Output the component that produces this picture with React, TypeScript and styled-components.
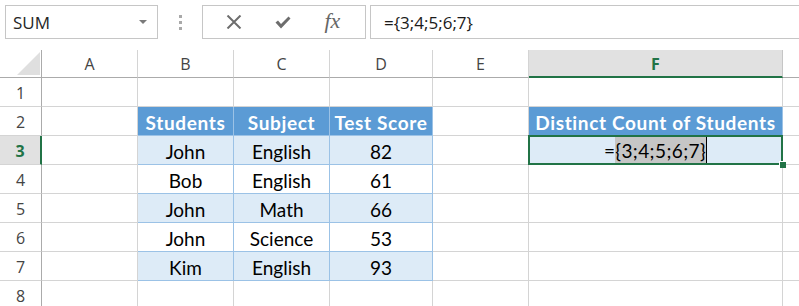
import styled, { createGlobalStyle, css } from 'styled-components'

const GlobalStyle = createGlobalStyle`
  html, body {
    margin: 0;
    padding: 0;
    background: #ffffff;
    overflow: hidden;
  }
`

const Page = styled.div`
  width: 799px;
  height: 306px;
  overflow: hidden;
  background: #ffffff;
`

const FormulaBar = styled.div`
  display: flex;
  align-items: center;
  height: 34px;
  padding: 5px 0 0 5px;
  margin-bottom: 11px;
`

const NameBox = styled.div`
  display: flex;
  align-items: center;
  justify-content: space-between;
  box-sizing: border-box;
  width: 153px;
  height: 34px;
  padding: 0 10px 0 7px;
  border: 1px solid #c6c6c6;
  font-family: 'Open Sans', sans-serif;
  font-size: 17px;
  color: #262626;
`

const DropArrow = styled.span`
  width: 0;
  height: 0;
  border-left: 4px solid transparent;
  border-right: 4px solid transparent;
  border-top: 4px solid #7a7a7a;
`

const Grip = styled.div`
  display: flex;
  flex-direction: column;
  gap: 3px;
  margin: 0 20px 0 21px;

  span {
    width: 3px;
    height: 3px;
    background: #a9a9a9;
  }
`

const ButtonBox = styled.div`
  display: flex;
  align-items: center;
  justify-content: space-around;
  box-sizing: border-box;
  width: 164px;
  height: 34px;
  padding: 0 8px 0 6px;
  border: 1px solid #c6c6c6;
  margin-right: 4px;
`

const Fx = styled.span`
  font-family: 'Liberation Serif', serif;
  font-style: italic;
  font-size: 22px;
  color: #666666;
  margin-top: -2px;
`

const FormulaInput = styled.div`
  flex: 1;
  display: flex;
  align-items: center;
  box-sizing: border-box;
  height: 34px;
  padding-left: 13px;
  border: 1px solid #c6c6c6;
  border-right: none;
  font-family: 'Open Sans', sans-serif;
  font-size: 17px;
  color: #1a1a1a;
`

const Sheet = styled.div`
  display: grid;
  grid-template-columns: 42px 96px 96px 96px 103px 96px 254px 96px;
  grid-auto-rows: 29px;
  grid-template-rows: 28px;
`

const Corner = styled.div`
  box-sizing: border-box;
  display: flex;
  align-items: flex-end;
  justify-content: flex-end;
  padding: 0 1px 2px 0;
  border-right: 1px solid #ababab;
  border-bottom: 1px solid #ababab;

  span {
    width: 23px;
    height: 23px;
    background: #dfdfdf;
    clip-path: polygon(100% 0, 100% 100%, 0 100%);
  }
`

const ColHead = styled.div<{ $active?: boolean }>`
  box-sizing: border-box;
  display: flex;
  align-items: center;
  justify-content: center;
  padding-top: 1px;
  border-right: 1px solid #d4d4d4;
  border-bottom: 1px solid #ababab;
  font-family: 'Open Sans', sans-serif;
  font-size: 16px;
  color: #444444;
  ${({ $active }) =>
    $active &&
    css`
      background: #e1e1e1;
      color: #217346;
      font-weight: 700;
      border-bottom: 2px solid #217346;
      border-right-color: #c6c6c6;
    `}
`

const RowHead = styled.div<{ $active?: boolean }>`
  box-sizing: border-box;
  display: flex;
  align-items: center;
  justify-content: center;
  padding-top: 1px;
  border-right: 1px solid #ababab;
  border-bottom: 1px solid #d4d4d4;
  font-family: 'Open Sans', sans-serif;
  font-size: 16px;
  color: #444444;
  ${({ $active }) =>
    $active &&
    css`
      background: #e1e1e1;
      color: #217346;
      font-weight: 700;
      border-right: 2px solid #217346;
    `}
`

type Tone = 'none' | 'head' | 'band' | 'white'

const Cell = styled.div<{ $tone: Tone; $selected?: boolean }>`
  position: relative;
  box-sizing: border-box;
  display: flex;
  align-items: center;
  justify-content: center;
  padding-top: 2px;
  white-space: nowrap;
  border-right: 1px solid #d4d4d4;
  border-bottom: 1px solid #d4d4d4;
  font-family: Lato, 'Open Sans', sans-serif;
  font-size: 19px;
  color: #000000;
  ${({ $tone }) =>
    $tone === 'head' &&
    css`
      background: #5b9bd5;
      color: #ffffff;
      font-weight: 700;
      letter-spacing: 0.65px;
      border-color: #9bc2e6;
    `}
  ${({ $tone }) =>
    $tone === 'band' &&
    css`
      background: #ddebf7;
      border-color: #9bc2e6;
    `}
  ${({ $tone }) =>
    $tone === 'white' &&
    css`
      background: #ffffff;
      border-color: #9bc2e6;
    `}
  ${({ $selected }) =>
    $selected &&
    css`
      padding-top: 0;
      letter-spacing: 0.4px;
      &::after {
        content: '';
        position: absolute;
        left: -1px;
        top: -1px;
        right: -1px;
        bottom: -1px;
        border: 2px solid #217346;
      }
    `}
`

const FillHandle = styled.span`
  position: absolute;
  right: -4px;
  bottom: -4px;
  width: 6px;
  height: 6px;
  background: #217346;
  border: 1px solid #ffffff;
  border-right: none;
  border-bottom: none;
  z-index: 1;
`

const Marked = styled.span`
  display: inline-flex;
  align-items: center;
  height: 27px;
  padding-top: 1px;
  background: #c6c6c6;
  border-right: 1px solid #000000;
`

// the last column runs past the right edge, its letter is off screen
const columns = ['A', 'B', 'C', 'D', 'E', 'F', '']

const table: string[][] = [
  ['Students', 'Subject', 'Test Score'],
  ['John', 'English', '82'],
  ['Bob', 'English', '61'],
  ['John', 'Math', '66'],
  ['John', 'Science', '53'],
  ['Kim', 'English', '93'],
]

function CancelIcon() {
  return (
    <svg width="16" height="14" viewBox="0 0 16 14">
      <path d="M1.5 0.5 L14.5 13.5 M14.5 0.5 L1.5 13.5" stroke="#6d6d6d" strokeWidth="2" fill="none" />
    </svg>
  )
}

function EnterIcon() {
  return (
    <svg width="16" height="13" viewBox="0 0 16 13">
      <path d="M0.5 6.5 L3 4.5 L6 8 L13.5 0.5 L15.5 2.5 L6 12.5 Z" fill="#6d6d6d" />
    </svg>
  )
}

function sheetRow(r: number) {
  const cells = []
  for (let c = 0; c < 7; c++) {
    const key = `${r}-${c}`
    const inTable = r >= 2 && r <= 7 && c >= 1 && c <= 3
    if (inTable) {
      const tone: Tone = r === 2 ? 'head' : r % 2 === 1 ? 'band' : 'white'
      cells.push(
        <Cell key={key} $tone={tone}>
          {table[r - 2][c - 1]}
        </Cell>
      )
    } else if (c === 5 && r === 2) {
      cells.push(
        <Cell key={key} $tone="head">
          Distinct Count of Students
        </Cell>
      )
    } else if (c === 5 && r === 3) {
      cells.push(
        <Cell key={key} $tone="band" $selected>
          =<Marked>{'{3;4;5;6;7}'}</Marked>
          <FillHandle />
        </Cell>
      )
    } else {
      cells.push(<Cell key={key} $tone="none" />)
    }
  }
  return cells
}

export default function App() {
  const rows = [1, 2, 3, 4, 5, 6, 7, 8]
  return (
    <Page>
      <GlobalStyle />
      <FormulaBar>
        <NameBox>
          SUM
          <DropArrow />
        </NameBox>
        <Grip>
          <span />
          <span />
          <span />
        </Grip>
        <ButtonBox>
          <CancelIcon />
          <EnterIcon />
          <Fx>fx</Fx>
        </ButtonBox>
        <FormulaInput>={'{3;4;5;6;7}'}</FormulaInput>
      </FormulaBar>

      <Sheet>
        <Corner>
          <span />
        </Corner>
        {columns.map((col, i) => (
          <ColHead key={i} $active={col === 'F'}>
            {col}
          </ColHead>
        ))}
        {rows.map((r) => [
          <RowHead key={`h${r}`} $active={r === 3}>
            {r}
          </RowHead>,
          ...sheetRow(r),
        ])}
      </Sheet>
    </Page>
  )
}
